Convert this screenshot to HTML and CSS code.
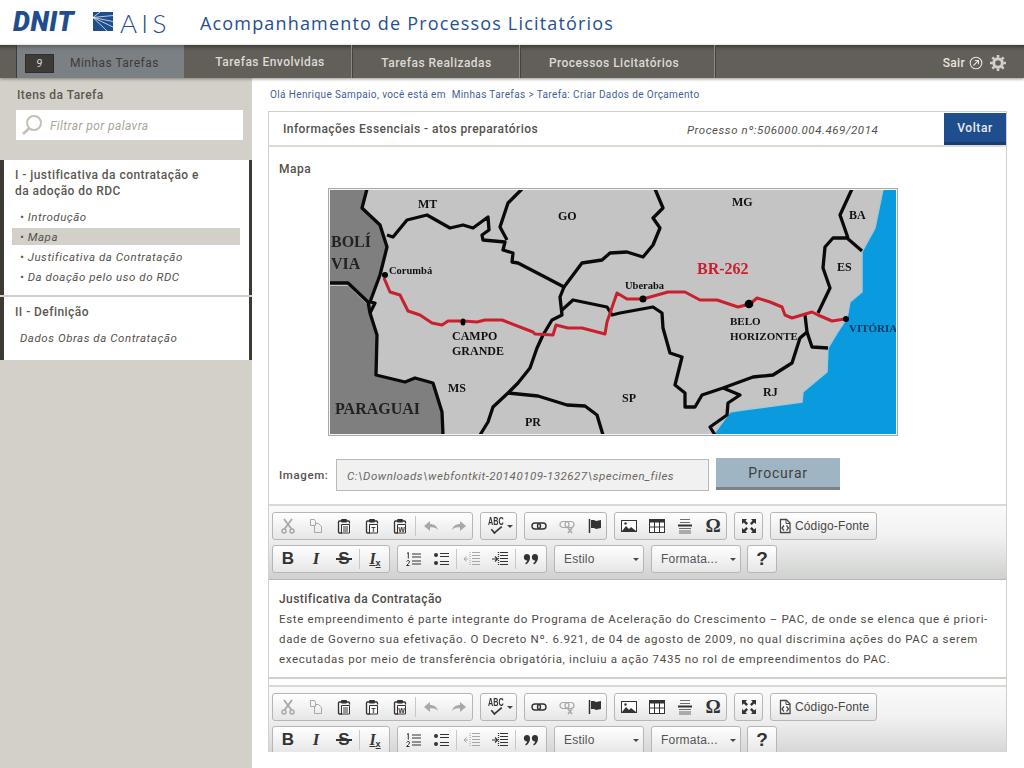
FILE: index.html
```html
<!DOCTYPE html>
<html lang="pt-BR">
<head>
<meta charset="utf-8">
<title>Acompanhamento de Processos Licitatórios</title>
<link rel="stylesheet" href="styles.css">
</head>
<body>
<svg class="defs" width="0" height="0" aria-hidden="true">
  <symbol id="i-cut" viewBox="0 0 16 16"><path d="M4 1l7.500 10M12 1L4.500 11" fill="none" stroke="currentColor" stroke-width="1.800"/><circle cx="4" cy="13" r="2" fill="none" stroke="currentColor" stroke-width="1.500"/><circle cx="12" cy="13" r="2" fill="none" stroke="currentColor" stroke-width="1.500"/></symbol>
  <symbol id="i-copy" viewBox="0 0 16 16"><path d="M2.500 1.500h4l1 2v4h-5zM7.500 5.500h3l3 3v6h-7v-7" fill="none" stroke="currentColor"/></symbol>
  <symbol id="i-clip" viewBox="0 0 16 16"><path d="M5 3H3.500Q2.500 3 2.500 4v10q0 1 1 1H6" fill="none" stroke="currentColor" stroke-width="1.300"/><path d="M11 3h1.500q1 0 1 1v1.500" fill="none" stroke="currentColor" stroke-width="1.300"/><rect x="5" y="1" width="6" height="3.500" rx="1" fill="currentColor"/><path d="M5.500 6.500h8v8.500h-8z" fill="#fff" stroke="currentColor"/></symbol>
  <symbol id="i-undo" viewBox="0 0 16 16"><path d="M1 8l6-5v3c4 0 7 2 8 6-2-2-4-3-8-2.500V13z" fill="currentColor"/></symbol>
  <symbol id="i-redo" viewBox="0 0 16 16"><path d="M15 8L9 3v3c-4 0-7 2-8 6 2-2 4-3 8-2.500V13z" fill="currentColor"/></symbol>
  <symbol id="i-link" viewBox="0 0 16 16"><rect x="1" y="5" width="8.500" height="6" rx="3" fill="none" stroke="currentColor" stroke-width="1.400"/><rect x="6.500" y="5" width="8.500" height="6" rx="3" fill="none" stroke="currentColor" stroke-width="1.400"/></symbol>
  <symbol id="i-unlink" viewBox="0 0 16 16"><rect x="1" y="3.500" width="9" height="6" rx="3" fill="none" stroke="currentColor" stroke-width="1.200"/><rect x="6" y="3.500" width="9" height="6" rx="3" fill="none" stroke="currentColor" stroke-width="1.200"/><path d="M9 10l4 5M13 10l-4 5" stroke="currentColor" stroke-width="1.500"/></symbol>
  <symbol id="i-flag" viewBox="0 0 16 16"><path d="M2.500 1v14" stroke="currentColor" stroke-width="1.500"/><path d="M4 2h3l2 1 5-1v8l-5 1-2-1H4z" fill="currentColor"/></symbol>
  <symbol id="i-image" viewBox="0 0 16 16"><rect x=".500" y="2.500" width="15" height="11" fill="#fff" stroke="currentColor"/><path d="M1 13l4-5 3 3 2-2 5 4z" fill="currentColor"/><circle cx="4.500" cy="5.500" r="1.200" fill="currentColor"/></symbol>
  <symbol id="i-table" viewBox="0 0 16 16"><rect x=".500" y="1.500" width="15" height="13" fill="#fff" stroke="currentColor"/><rect x="0" y="1" width="16" height="3.500" fill="currentColor"/><path d="M5.500 4v10M10.500 4v10M1 9h14" stroke="currentColor"/></symbol>
  <symbol id="i-hr" viewBox="0 0 16 16"><path d="M3 1.500h10M3 4.500h10M2 10.500h12M2 13h12M2 15h12" stroke="currentColor" opacity=".7"/><path d="M1 7.500h14" stroke="currentColor" stroke-width="2"/></symbol>
  <symbol id="i-max" viewBox="0 0 16 16"><path d="M1 1h5L4.500 2.800 7 5.300 5.300 7 2.800 4.500 1 6zM15 1v5l-1.800-1.500L10.700 7 9 5.300l2.500-2.500L10 1zM1 15v-5l1.800 1.500L5.300 9 7 10.700l-2.500 2.500L6 15zM15 15h-5l1.500-1.800L9 10.700 10.700 9l2.500 2.500L15 10z" fill="currentColor"/></symbol>
  <symbol id="i-source" viewBox="0 0 16 16"><path d="M3.500 1.500h6l3.500 3.500v9.500H3.500z" fill="#fff" stroke="currentColor" stroke-width="1.300"/><path d="M9 1.500V5.500h4" fill="none" stroke="currentColor"/><path d="M7 7.500L5 10l2 2.500M9.500 7.500l2 2.500-2 2.500" fill="none" stroke="currentColor" stroke-width="1.300"/></symbol>
  <symbol id="i-ol" viewBox="0 0 16 16"><path d="M2 2.500l1.300-1v6M1.500 10.500q1-1.500 2.500-.8t-.5 2.800L1.500 14.500h3" fill="none" stroke="currentColor" stroke-width="1"/><path d="M7 3h9M7 6h9M7 10h9M7 13h9" stroke="currentColor" stroke-width="1.200"/></symbol>
  <symbol id="i-ul" viewBox="0 0 16 16"><circle cx="3" cy="4" r="2" fill="currentColor"/><circle cx="3" cy="12" r="2" fill="currentColor"/><path d="M7 2.500h9M7 5.500h9M7 10.500h9M7 13.500h9" stroke="currentColor" stroke-width="1.200"/></symbol>
  <symbol id="i-outdent" viewBox="0 0 16 16"><path d="M8 1.500h8M8 4.500h8M8 7.500h8M8 10.500h8M8 13.500h8" stroke="currentColor"/><path d="M6 1v14" stroke="currentColor" stroke-dasharray="1 1"/><path d="M0 8h4M2.500 5.500L0 8l2.500 2.500" fill="none" stroke="currentColor"/></symbol>
  <symbol id="i-indent" viewBox="0 0 16 16"><path d="M8 1.500h8M8 4.500h8M8 7.500h8M8 10.500h8M8 13.500h8" stroke="currentColor"/><path d="M6.500 1v14" stroke="currentColor" stroke-width="1.300" stroke-dasharray="1 1"/><path d="M0 8h5M3 5.500L5.500 8 3 10.500" fill="none" stroke="currentColor" stroke-width="1.200"/></symbol>
  <symbol id="i-quote" viewBox="0 0 16 16"><path d="M4 3a3 3 0 0 1 3 3.500c0 3-1.500 5.500-4 7l-.8-1.200C3.500 11.300 4 10.500 4.200 9.500A3.200 3.200 0 0 1 4 3zM12 3a3 3 0 0 1 3 3.500c0 3-1.500 5.500-4 7l-.8-1.200c1.300-1 1.800-1.800 2-2.800A3.200 3.200 0 0 1 12 3z" fill="currentColor"/></symbol>
</svg>

<header class="topbar">
  <span class="logo-dnit">DNIT</span>
  <svg class="logo-mark" viewBox="0 0 20 19" width="20" height="19" aria-hidden="true">
    <rect width="20" height="19" fill="#1f4e8f"/>
    <path d="M0 5.500L20 15M0 5.500L20 9.500M0 5.500L20 3.500M0 5.500L14 19M0 5.500L7 0" stroke="#fff" stroke-width=".7" fill="none"/>
  </svg>
  <span class="logo-ais">AIS</span>
  <h1 class="app-title">Acompanhamento de Processos Licitatórios</h1>
</header>

<nav class="mainnav">
  <a class="tab tab-active"><span class="badge">9</span>Minhas Tarefas</a>
  <a class="tab tab-2">Tarefas Envolvidas</a>
  <a class="tab tab-3">Tarefas Realizadas</a>
  <a class="tab tab-4">Processos Licitatórios</a>
  <div class="nav-right">
    <span>Sair</span>
    <svg width="14" height="14" viewBox="0 0 14 14" aria-hidden="true"><circle cx="7" cy="7" r="5.800" fill="none" stroke="#e6e4df" stroke-width="1.100"/><path d="M4.500 9.500L9.300 4.700M5.800 4.500h3.700v3.700" fill="none" stroke="#e6e4df" stroke-width="1.100"/></svg>
    <svg class="gear" width="16" height="16" viewBox="0 0 16 16" aria-hidden="true"><circle cx="8" cy="8" r="4.300" fill="none" stroke="#d3d0c9" stroke-width="3"/><path d="M8 0v16M0 8h16M2.300 2.300l11.400 11.400M13.700 2.300L2.300 13.700" stroke="#d3d0c9" stroke-width="2.600" stroke-dasharray="2.600 10.800 2.600 0"/></svg>
  </div>
</nav>

<div class="layout">
  <aside class="sidebar">
    <h2 class="side-title">Itens da Tarefa</h2>
    <div class="search">
      <svg width="22" height="22" viewBox="0 0 22 22" aria-hidden="true"><circle cx="13" cy="9" r="7" fill="none" stroke="#c4c0b8" stroke-width="2"/><path d="M8 14.500L2 20" stroke="#c4c0b8" stroke-width="2.600"/></svg>
      <span>Filtrar por palavra</span>
    </div>
    <section class="side-sec side-sec-1">
      <h3>I - justificativa da contratação e<br>da adoção do RDC</h3>
      <ul>
        <li>• Introdução</li>
        <li class="sel">• Mapa</li>
        <li>• Justificativa da Contratação</li>
        <li>• Da doação pelo uso do RDC</li>
      </ul>
    </section>
    <section class="side-sec side-sec-2">
      <h3>II - Definição</h3>
      <p>Dados Obras da Contratação</p>
    </section>
  </aside>

  <main class="content">
    <p class="crumbs">Olá Henrique Sampaio, você está em &nbsp;Minhas Tarefas &gt; Tarefa: Criar Dados de Orçamento</p>
    <div class="panel">
      <div class="panel-head">
        <strong>Informações Essenciais - atos preparatórios</strong>
        <em>Processo nº:506000.004.469/2014</em>
        <button class="btn-back">Voltar</button>
      </div>
      <h4 class="map-label">Mapa</h4>
      <svg class="map" viewBox="328 188 570 248" width="570" height="248" role="img" aria-label="Mapa da BR-262">
        <rect x="328" y="188" width="570" height="248" fill="#c4c4c4"/>
        <path class="m-dark" d="M329 189H367L362 208 380 225 387 247 380 275 372 300 370 313 368 302 348 283 329 283Z"/>
        <path class="m-dark" d="M329 286H348L368 305 377 335 376 375 405 382 415 378 433 383 442 412 443 435H329Z"/>
        <path class="m-sea" d="M883 189L875 228 862 252 862 292 850 302 847 318 837 333 828 348 827 372 803 392 802 402 743 410 730 412 713 435H897V189Z"/>
        <g class="m-line">
          <path d="M367 189L362 208 380 225 387 247 380 275 370 302 375 303 370 313"/>
          <path d="M330 283H348L368 302 370 313 377 335 376 375 405 382 415 378 433 383 442 412 443 435"/>
          <path d="M387 235L393 237 407 220 427 215 450 228 463 225 473 228 488 217 489 230 482 235 483 240 505 242 503 250 513 253 512 262 518 263 545 277 564 287 560 297 562 315 552 320 543 335 537 348 530 368 518 383 508 393 493 407 488 422 480 435"/>
          <path d="M522 189L508 203 500 227 507 240"/>
          <path d="M564 287L582 263 602 260 610 253 627 252 643 257 653 245 660 228 653 218 663 208 655 189"/>
          <path d="M562 310L573 300 607 307 612 315 620 313 653 307 662 313 663 328 670 353 682 357 675 385 685 393 685 407 695 407 702 395 723 388 753 377 773 375 792 363 800 338 807 332 805 315"/>
          <path d="M807 332L812 347 828 348"/>
          <path d="M723 388L740 395 728 403 727 415 710 427 715 435"/>
          <path d="M818 313L830 288 823 268 825 247 833 238 847 238 862 251"/>
          <path d="M852 189L840 215 848 238"/>
          <path d="M508 393L538 396 567 405 585 406 597 415 603 435"/>
        </g>
        <path class="m-road" d="M384 278L390 292 400 295 408 311 420 315 432 323 442 325 448 321 463 321 477 322 485 320 502 320 533 332 535 334 553 335 556 325 568 328 582 328 605 334 607 322 617 293 627 299 643 299 668 292 685 292 700 300 717 300 738 307 750 304 757 298 770 302 782 307 785 315 792 318 812 312 818 315 832 321 845 319"/>
        <circle cx="385" cy="275" r="3"/>
        <ellipse cx="463" cy="322" rx="2.500" ry="3.500"/>
        <circle cx="643" cy="299" r="3.500"/>
        <circle cx="749" cy="304" r="4.300"/>
        <circle cx="846" cy="319" r="3"/>
        <g class="m-text">
          <text x="418" y="208">MT</text>
          <text x="558" y="220">GO</text>
          <text x="732" y="206">MG</text>
          <text x="849" y="219">BA</text>
          <text x="837" y="271">ES</text>
          <text x="448" y="392">MS</text>
          <text x="622" y="402">SP</text>
          <text x="763" y="396">RJ</text>
          <text x="525" y="426">PR</text>
          <text class="m-sm" x="389" y="274">Corumbá</text>
          <text class="m-sm" x="625" y="289">Uberaba</text>
          <text x="452" y="340">CAMPO</text>
          <text x="452" y="355">GRANDE</text>
          <text class="m-hz" x="730" y="325">BELO</text>
          <text class="m-hz" x="730" y="340">HORIZONTE</text>
          <text class="m-blue" x="849" y="332">VITÓRIA</text>
          <text class="m-big" x="331" y="247">BOLÍ</text>
          <text class="m-big" x="331" y="269">VIA</text>
          <text class="m-big" x="335" y="414">PARAGUAI</text>
          <text class="m-red" x="697" y="274">BR-262</text>
        </g>
        <rect x="329.500" y="189.500" width="567" height="245" fill="none" stroke="#f4f4f4"/>
        <rect x="328.500" y="188.500" width="569" height="247" fill="none" stroke="#a9a9a4"/>
      </svg>
      <div class="file-row">
        <label>Imagem:</label>
        <div class="file-input">C:\Downloads\webfontkit-20140109-132627\specimen_files</div>
        <button class="btn-browse">Procurar</button>
      </div>

      <div class="editor">
        <div class="toolbar">
          <div class="tb-row">
            <div class="tb-group w201">
              <span class="tb off"><svg><use href="#i-cut"/></svg></span>
              <span class="tb off"><svg><use href="#i-copy"/></svg></span>
              <span class="tb"><svg viewBox="0 0 16 16"><use href="#i-clip" width="16" height="16"/><path class="clip-lines" d="M7 9h5M7 11h5M7 13h5"/></svg></span>
              <span class="tb"><svg viewBox="0 0 16 16"><use href="#i-clip" width="16" height="16"/><text x="9.500" y="13.500" class="svg-mini">T</text></svg></span>
              <span class="tb"><svg viewBox="0 0 16 16"><use href="#i-clip" width="16" height="16"/><text x="9.500" y="13.500" class="svg-mini">W</text></svg></span>
              <i class="tb-sep"></i>
              <span class="tb off"><svg><use href="#i-undo"/></svg></span>
              <span class="tb off"><svg><use href="#i-redo"/></svg></span>
            </div>
            <div class="tb-group w37"><span class="tb tb-abc"><b>ABC</b><i class="check"></i><i class="caret"></i></span></div>
            <div class="tb-group w84">
              <span class="tb"><svg><use href="#i-link"/></svg></span>
              <span class="tb off"><svg><use href="#i-unlink"/></svg></span>
              <span class="tb"><svg><use href="#i-flag"/></svg></span>
            </div>
            <div class="tb-group w113">
              <span class="tb"><svg><use href="#i-image"/></svg></span>
              <span class="tb"><svg><use href="#i-table"/></svg></span>
              <span class="tb"><svg><use href="#i-hr"/></svg></span>
              <span class="tb tb-omega">Ω</span>
            </div>
            <div class="tb-group w29"><span class="tb"><svg><use href="#i-max"/></svg></span></div>
            <div class="tb-group w107"><span class="tb-label"><svg><use href="#i-source"/></svg>Código-Fonte</span></div>
          </div>
          <div class="tb-row">
            <div class="tb-group w118">
              <span class="tb tb-b">B</span>
              <span class="tb tb-i">I</span>
              <span class="tb tb-s">S</span>
              <i class="tb-sep"></i>
              <span class="tb tb-tx">I<small>x</small></span>
            </div>
            <div class="tb-group w150">
              <span class="tb"><svg><use href="#i-ol"/></svg></span>
              <span class="tb"><svg><use href="#i-ul"/></svg></span>
              <i class="tb-sep"></i>
              <span class="tb off"><svg><use href="#i-outdent"/></svg></span>
              <span class="tb"><svg><use href="#i-indent"/></svg></span>
              <i class="tb-sep"></i>
              <span class="tb"><svg><use href="#i-quote"/></svg></span>
            </div>
            <div class="tb-group tb-combo">Estilo<i class="caret"></i></div>
            <div class="tb-group tb-combo">Formata...<i class="caret"></i></div>
            <div class="tb-group tb-help">?</div>
          </div>
        </div>
        <div class="editor-body">
          <strong>Justificativa da Contratação</strong>
          <p>Este empreendimento é parte integrante do Programa de Aceleração do Crescimento – PAC, de onde se elenca que é priori-<br>dade de Governo sua efetivação. O Decreto Nº. 6.921, de 04 de agosto de 2009, no qual discrimina ações do PAC a serem<br>executadas por meio de transferência obrigatória, incluiu a ação 7435 no rol de empreendimentos do PAC.</p>
        </div>
      </div>

      <div class="editor editor-2">
        <div class="toolbar">
          <div class="tb-row">
            <div class="tb-group w201">
              <span class="tb off"><svg><use href="#i-cut"/></svg></span>
              <span class="tb off"><svg><use href="#i-copy"/></svg></span>
              <span class="tb"><svg viewBox="0 0 16 16"><use href="#i-clip" width="16" height="16"/><path class="clip-lines" d="M7 9h5M7 11h5M7 13h5"/></svg></span>
              <span class="tb"><svg viewBox="0 0 16 16"><use href="#i-clip" width="16" height="16"/><text x="9.500" y="13.500" class="svg-mini">T</text></svg></span>
              <span class="tb"><svg viewBox="0 0 16 16"><use href="#i-clip" width="16" height="16"/><text x="9.500" y="13.500" class="svg-mini">W</text></svg></span>
              <i class="tb-sep"></i>
              <span class="tb off"><svg><use href="#i-undo"/></svg></span>
              <span class="tb off"><svg><use href="#i-redo"/></svg></span>
            </div>
            <div class="tb-group w37"><span class="tb tb-abc"><b>ABC</b><i class="check"></i><i class="caret"></i></span></div>
            <div class="tb-group w84">
              <span class="tb"><svg><use href="#i-link"/></svg></span>
              <span class="tb off"><svg><use href="#i-unlink"/></svg></span>
              <span class="tb"><svg><use href="#i-flag"/></svg></span>
            </div>
            <div class="tb-group w113">
              <span class="tb"><svg><use href="#i-image"/></svg></span>
              <span class="tb"><svg><use href="#i-table"/></svg></span>
              <span class="tb"><svg><use href="#i-hr"/></svg></span>
              <span class="tb tb-omega">Ω</span>
            </div>
            <div class="tb-group w29"><span class="tb"><svg><use href="#i-max"/></svg></span></div>
            <div class="tb-group w107"><span class="tb-label"><svg><use href="#i-source"/></svg>Código-Fonte</span></div>
          </div>
          <div class="tb-row">
            <div class="tb-group w118">
              <span class="tb tb-b">B</span>
              <span class="tb tb-i">I</span>
              <span class="tb tb-s">S</span>
              <i class="tb-sep"></i>
              <span class="tb tb-tx">I<small>x</small></span>
            </div>
            <div class="tb-group w150">
              <span class="tb"><svg><use href="#i-ol"/></svg></span>
              <span class="tb"><svg><use href="#i-ul"/></svg></span>
              <i class="tb-sep"></i>
              <span class="tb off"><svg><use href="#i-outdent"/></svg></span>
              <span class="tb"><svg><use href="#i-indent"/></svg></span>
              <i class="tb-sep"></i>
              <span class="tb"><svg><use href="#i-quote"/></svg></span>
            </div>
            <div class="tb-group tb-combo">Estilo<i class="caret"></i></div>
            <div class="tb-group tb-combo">Formata...<i class="caret"></i></div>
            <div class="tb-group tb-help">?</div>
          </div>
        </div>
      </div>
    </div>
  </main>
</div>
</body>
</html>
```
FILE: styles.css
```css
* { box-sizing: border-box; }
html, body { margin: 0; height: 100%; }
body {
  width: 1024px; height: 768px; overflow: hidden; background: #fff;
  font-family: Roboto, "Liberation Sans", sans-serif; font-size: 12px; color: #4f4c47;
}
.defs { position: absolute; }
.svg-mini { font: bold 7px "Liberation Sans", sans-serif; text-anchor: middle; fill: currentColor; }
.clip-lines { stroke: currentColor; fill: none; stroke-width: 1; }

/* header */
.topbar { height: 45px; display: flex; align-items: center; padding-left: 13px; background: #fff; }
.logo-dnit { font: italic 900 27px/1 Roboto, "Liberation Sans", sans-serif; color: #1f4e8f; width: 80px; letter-spacing: .5px; }
.logo-mark { margin-top: -2px; }
.logo-ais { font: 300 26px/1 Lato, "Liberation Sans", sans-serif; color: #1f4e8f; letter-spacing: 4.3px; margin-left: 7px; width: 80px; }
.app-title { margin: 0; font: 400 18px/1 "Open Sans", sans-serif; color: #264f8f; letter-spacing: 1.17px; }

/* nav */
.mainnav {
  position: relative; z-index: 2; height: 33px; display: flex; align-items: stretch; padding-left: 16px;
  background: linear-gradient(#3e3c38 0, #5c5853 4px, #625e58 7px);
  box-shadow: 0 1px 3px rgba(60,58,54,.55);
  color: #dcdad5; font-size: 12px; font-weight: 500; letter-spacing: .47px;
}
.tab { display: flex; align-items: center; justify-content: center; border-right: 1px solid #8d8a84; box-shadow: 1px 0 0 #45423e; padding: 3px 0 0 2px; }
.tab-active {
  width: 168px; justify-content: flex-start; background: linear-gradient(#5f6366 0, #777c80 4px, #7b8085 7px); color: #3e3c38;
  padding-left: 8px; border-left: 1px solid #3e3c38; border-right: 0; box-shadow: none; font-weight: 400; letter-spacing: .47px;
}
.badge {
  width: 29px; height: 19px; margin-right: 16px; background: #3c3b37; border: 1px solid #2f2e2b; color: #d8d6d1;
  display: flex; align-items: center; justify-content: center; font: italic 11px Roboto, sans-serif;
}
.tab-2 { width: 168px; padding: 0 0 0 5px; }
.tab-3 { width: 168px; }
.tab-4 { width: 195px; padding-right: 8px; }
.nav-right { margin-left: auto; padding: 3px 18px 0 0; display: flex; align-items: center; gap: 4px; letter-spacing: .3px; color: #e6e4df; }
.gear { margin-left: 3px; }

/* layout */
.layout { display: flex; height: 690px; }
.sidebar { width: 252px; flex: none; height: 690px; background: #d3d0c9; padding-top: 10px; }
.side-title { margin: 0 0 8px 17px; font-size: 12px; line-height: 14px; font-weight: 500; color: #5b5751; letter-spacing: .45px; }
.search { margin-left: 16px; width: 227px; height: 30px; background: #fff; display: flex; align-items: center; padding-left: 5px; gap: 7px; }
.search span { font-style: italic; color: #a9a59d; font-size: 12px; letter-spacing: .42px; margin-top: 2px; }
.side-sec { background: #fff; border-left: 4px solid #3d3a33; border-right: 3px solid #3d3a33; }
.side-sec h3 { margin: 0; padding-left: 11px; font-size: 12px; line-height: 16px; font-weight: 500; color: #5b5751; letter-spacing: .45px; }
.side-sec-1 { margin-top: 20px; height: 135px; padding-top: 7px; }
.side-sec-1 ul { list-style: none; margin: 8px 0 0; padding: 0; }
.side-sec-1 li { height: 20px; line-height: 20px; margin-left: 8px; margin-right: 9px; padding-left: 8px; font-style: italic; font-size: 11.500px; letter-spacing: .55px; color: #55524d; }
.side-sec-1 li.sel { background: linear-gradient(transparent 1px, #d3d0c9 1px, #d3d0c9 18px, transparent 18px); }
.side-sec-2 { margin-top: 2px; height: 63px; padding-top: 7px; }
.side-sec-2 p { margin: 10px 0 0 16px; font-style: italic; font-size: 11.500px; line-height: 16px; letter-spacing: .55px; color: #55524d; }

/* content */
.content { flex: 1; padding: 0 17px 0 16px; height: 674px; overflow: hidden; }
.crumbs { margin: 0; height: 33px; padding: 10px 0 0 2px; font-size: 10px; line-height: 13px; letter-spacing: .38px; color: #3f5f9c; }
.panel { width: 739px; height: 641px; overflow: hidden; border: 1px solid #d3d0c9; border-bottom: 0; }
.panel-head { height: 35px; display: flex; align-items: center; padding-left: 14px; border-bottom: 2px solid #dedbd5; }
.panel-head strong { font-size: 12px; font-weight: 500; color: #55524d; letter-spacing: .43px; width: 404px; }
.panel-head em { font-size: 11.500px; letter-spacing: .55px; color: #55524d; width: 257px; margin-top: 2px; }
.btn-back {
  width: 62px; height: 32px; margin-top: 1px; border: 0; border-bottom: 3px solid #173e74; background: #1f4e8f; color: #e8ebf0;
  font: 500 12px Roboto, sans-serif; letter-spacing: .6px; padding: 1px 0 0;
}
.map-label { margin: 15px 0 12px 10px; font-size: 12px; line-height: 14px; font-weight: 500; color: #55524d; letter-spacing: .5px; }
.map { display: block; margin-left: 59px; filter: blur(.35px); }
.m-dark { fill: #7f7f7f; }
.m-sea { fill: #0a9ade; stroke: #a9c8d6; stroke-width: 1.500; }
.m-line path { fill: none; stroke: #0a0a0a; stroke-width: 3.300; stroke-linejoin: round; }
.m-road { fill: none; stroke: #c8202f; stroke-width: 3; stroke-linejoin: round; }
.m-text text { font: bold 12px "Liberation Serif", serif; fill: #111; }
.m-text .m-sm { font-size: 10.500px; }
.m-text .m-hz { font-size: 11px; }
.m-text .m-big { font-size: 16px; fill: #222; }
.m-text .m-red { font-size: 16px; fill: #c8202f; }
.m-text .m-blue { font-size: 11px; fill: #0b3a63; }
.file-row { display: flex; align-items: flex-start; margin-top: 22px; padding-left: 10px; }
.file-row label { width: 57px; margin-top: 10px; line-height: 14px; font-weight: 500; letter-spacing: .6px; color: #55524d; font-size: 11.500px; }
.file-input {
  width: 373px; height: 32px; margin-top: 1px; border: 1px solid #bdb8b0; background: #f1f1f1; padding-left: 10px; line-height: 32px;
  font-style: italic; font-size: 11.500px; letter-spacing: .5px; color: #6a6762;
}
.btn-browse {
  width: 124px; height: 32px; margin-left: 7px; border: 0; border-bottom: 3px solid #7e8285; background: #a0b5c4; color: #3f3f3d;
  font: 400 14px Roboto, sans-serif; letter-spacing: .8px; padding: 0;
}

/* editor */
.editor { margin-top: 13px; }
.editor-2 { margin-top: 6px; }
.toolbar {
  height: 76px; padding: 6px 3px 0; border-top: 2px solid #d9d9d9; border-bottom: 1px solid #b6b6b6;
  background: linear-gradient(#fafafa, #f2f2f2 40%, #cfd1cf);
}
.tb-row { display: flex; gap: 7px; height: 28px; margin-bottom: 5px; }
.tb-group {
  display: flex; align-items: center; height: 28px; border: 1px solid #b6b6b6; border-radius: 3px; color: #333;
  background: linear-gradient(#fff, #e6e6e6); padding-left: 1px;
}
.w201 { width: 201px; } .w37 { width: 37px; } .w84 { width: 83px; padding-left: 0; margin-right: 0; }
.w113 { width: 113px; padding-left: 0; } .w29 { width: 29px; padding-left: 0; } .w107 { width: 107px; }
.w118 { width: 118px; } .w150 { width: 150px; }
.tb { width: 28px; height: 26px; display: flex; align-items: center; justify-content: center; position: relative; flex: none; }
.w29 .tb { width: 27px; }
.tb svg, .tb-label svg { width: 16px; height: 16px; display: block; }
.tb.off { color: #a8a8a8; }
.tb-sep { width: 1px; height: 20px; margin: 0 1px; background: #c8c8c8; flex: none; }
.tb-abc { width: 35px; justify-content: flex-start; padding-left: 6px; }
.tb-abc b { font: bold 10px "Liberation Sans Narrow", "Liberation Sans", sans-serif; position: absolute; left: 6px; top: 3px; letter-spacing: 0; transform: scaleX(.72); transform-origin: left center; }
.check { position: absolute; left: 8px; top: 12px; width: 13px; height: 7px; border-left: 2.500px solid #333; border-bottom: 2.500px solid #333; transform: rotate(-40deg) scale(.8, .8); }
.caret { display: block; width: 0; height: 0; border: 3px solid transparent; border-top-color: #444; border-bottom: 0; }
.tb-abc .caret { position: absolute; left: 25px; top: 12px; }
.tb-omega { font: bold 19px "Liberation Serif", serif; color: #333; }
.tb-label { display: flex; align-items: center; gap: 2px; padding-left: 5px; font: 12px "Liberation Sans", sans-serif; letter-spacing: .13px; color: #474747; white-space: nowrap; }
.tb-b { font: bold 17px "Liberation Sans", sans-serif; color: #333; }
.tb-i { font: italic bold 17px "Liberation Serif", serif; color: #333; }
.tb-s { font: bold 17px "Liberation Sans", sans-serif; color: #333; }
.tb-s::after { content: ""; position: absolute; left: 6px; right: 6px; top: 12px; height: 2px; background: #333; }
.tb-tx { font: italic bold 16px "Liberation Serif", serif; color: #333; text-decoration: underline; }
.tb-tx small { font: bold 9px "Liberation Sans", sans-serif; text-decoration: none; margin-top: 8px; }
.tb-combo { width: 90px; justify-content: space-between; padding: 0 4px 0 9px; font: 12px "Liberation Sans", sans-serif; color: #555; letter-spacing: .2px; }
.tb-help { width: 30px; margin-left: -1px; justify-content: center; padding: 0; font: bold 19px "Liberation Sans", sans-serif; color: #333; }
.editor-body { height: 99px; padding: 12px 10px 0; border-bottom: 2px solid #d3d0c9; font-size: 11.500px; line-height: 20px; letter-spacing: .68px; color: #4f4c47; }
.editor-body strong { display: block; font-weight: 500; font-size: 12px; line-height: 14px; letter-spacing: .43px; }
.editor-body p { margin: 3px 0 0; white-space: nowrap; }
```
